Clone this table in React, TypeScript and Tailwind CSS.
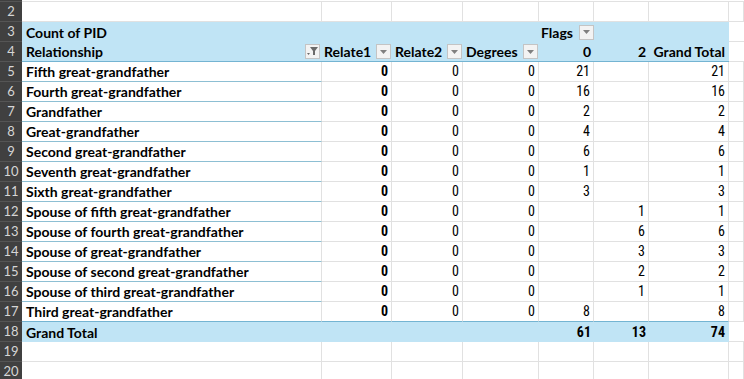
import React from "react";

const LABEL_FONT = "font-['Lato','Open_Sans',sans-serif]";
const NUM_FONT = "font-['Liberation_Sans_Narrow','Roboto_Condensed','Roboto',sans-serif]";

type Row = { label: string; e?: number; f?: number; g: number };

const ROWS: Row[] = [
  { label: "Fifth great-grandfather", e: 21, g: 21 },
  { label: "Fourth great-grandfather", e: 16, g: 16 },
  { label: "Grandfather", e: 2, g: 2 },
  { label: "Great-grandfather", e: 4, g: 4 },
  { label: "Second great-grandfather", e: 6, g: 6 },
  { label: "Seventh great-grandfather", e: 1, g: 1 },
  { label: "Sixth great-grandfather", e: 3, g: 3 },
  { label: "Spouse of fifth great-grandfather", f: 1, g: 1 },
  { label: "Spouse of fourth great-grandfather", f: 6, g: 6 },
  { label: "Spouse of great-grandfather", f: 3, g: 3 },
  { label: "Spouse of second great-grandfather", f: 2, g: 2 },
  { label: "Spouse of third great-grandfather", f: 1, g: 1 },
  { label: "Third great-grandfather", e: 8, g: 8 },
];

// dropdown arrow button on pivot headers
function DropBtn() {
  return (
    <span className="inline-flex h-[15px] w-[15px] items-center justify-center border border-[#c4c4c4] bg-[#f3f3f3]">
      <svg width="7" height="4" viewBox="0 0 7 4">
        <path d="M0 0 L7 0 L3.5 4 Z" fill="#808080" />
      </svg>
    </span>
  );
}

function FilterBtn() {
  return (
    <span className="inline-flex h-[15px] w-[15px] items-center justify-center border border-[#c4c4c4] bg-[#f3f3f3]">
      <svg width="11" height="9" viewBox="0 0 11 9">
        <path d="M3 0 L11 0 L8 4 L8 8 L6 8 L6 4 Z" fill="#6b6b6b" />
        <path d="M0 6 L3 6 L1.5 8 Z" fill="#6b6b6b" />
      </svg>
    </span>
  );
}

function RowNum({ n }: { n: number | string }) {
  return (
    <div className={`flex w-[22px] shrink-0 items-center justify-center border-b border-[#555] bg-[#404040] text-[13px] text-[#d6d6d6] ${LABEL_FONT}`}>
      {n}
    </div>
  );
}

function Cell({ w, children, cls = "" }: { w: string; children?: React.ReactNode; cls?: string }) {
  return (
    <div className={`flex shrink-0 items-center justify-end border-b border-r border-[#e1e1e1] pr-[3px] text-[14px] text-black ${NUM_FONT} ${w} ${cls}`}>
      {children}
    </div>
  );
}

function EmptyRow({ n }: { n: number }) {
  return (
    <div className="flex h-5">
      <RowNum n={n} />
      <Cell w="w-[300px]" />
      <Cell w="w-[70px]" />
      <Cell w="w-[71px]" />
      <Cell w="w-[76px]" />
      <Cell w="w-[55px]" />
      <Cell w="w-[55px]" />
      <Cell w="w-[80px]" />
      <Cell w="flex-1" />
    </div>
  );
}

export default function App() {
  return (
    <div className="h-[379px] w-[744px] overflow-hidden bg-white">
      {/* row 1 peeking */}
      <div className="flex h-[2px]">
        <div className="w-[22px] shrink-0 border-b border-[#555] bg-[#404040]" />
        <div className="flex-1 border-b border-[#e1e1e1]" />
      </div>
      <EmptyRow n={2} />

      {/* row 3 */}
      <div className="flex h-5">
        <RowNum n={3} />
        <div className={`flex w-[707px] shrink-0 items-center bg-[#c0e4f5] text-[14px] font-bold text-black ${LABEL_FONT}`}>
          <div className="w-[300px] shrink-0 pl-[4px]">Count of PID</div>
          <div className="w-[217px] shrink-0" />
          <div className="flex w-[55px] shrink-0 items-center gap-[6px] pl-[2px]">
            Flags
            <DropBtn />
          </div>
        </div>
        <div className="flex-1 border-b border-[#e1e1e1]" />
      </div>

      {/* row 4 */}
      <div className="flex h-5">
        <RowNum n={4} />
        <div className={`flex w-[707px] shrink-0 items-center border-b border-[#74b4d2] bg-[#c0e4f5] text-[14px] font-bold text-black ${LABEL_FONT}`}>
          <div className="flex w-[300px] shrink-0 items-center justify-between pl-[4px] pr-[2px]">
            Relationship
            <FilterBtn />
          </div>
          <div className="flex w-[70px] shrink-0 items-center justify-between pl-[2px] pr-[1px]">
            Relate1
            <DropBtn />
          </div>
          <div className="flex w-[71px] shrink-0 items-center justify-between pl-[3px] pr-[1px]">
            Relate2
            <DropBtn />
          </div>
          <div className="flex w-[76px] shrink-0 items-center justify-between pl-[3px] pr-[1px]">
            Degrees
            <DropBtn />
          </div>
          <div className="w-[55px] shrink-0 pr-[3px] text-right">0</div>
          <div className="w-[55px] shrink-0 pr-[3px] text-right">2</div>
          <div className="w-[80px] shrink-0 pr-[4px] text-right">Grand Total</div>
        </div>
        <div className="flex-1 border-b border-[#e1e1e1]" />
      </div>

      {ROWS.map((r, i) => {
        const last = i === ROWS.length - 1 ? "border-b-[#74b4d2]" : "";
        return (
          <div key={r.label} className="flex h-5">
            <RowNum n={i + 5} />
            <div
              className={`flex w-[300px] shrink-0 items-center border-b border-r border-r-[#e1e1e1] pl-[4px] text-[14px] font-bold text-black ${LABEL_FONT} ${
                last || "border-b-[#8dbfd3]"
              }`}
            >
              {r.label}
            </div>
            <Cell w="w-[70px]" cls={`font-bold ${last}`}>0</Cell>
            <Cell w="w-[71px]" cls={last}>0</Cell>
            <Cell w="w-[76px]" cls={last}>0</Cell>
            <Cell w="w-[55px]" cls={last}>{r.e}</Cell>
            <Cell w="w-[55px]" cls={last}>{r.f}</Cell>
            <Cell w="w-[80px]" cls={last}>{r.g}</Cell>
            <Cell w="flex-1" />
          </div>
        );
      })}

      {/* row 18 grand total */}
      <div className="flex h-5">
        <RowNum n={18} />
        <div className="flex w-[707px] shrink-0 items-center bg-[#c0e4f5] text-[14px] font-bold text-black">
          <div className={`w-[300px] shrink-0 pl-[4px] ${LABEL_FONT}`}>Grand Total</div>
          <div className="w-[217px] shrink-0" />
          <div className={`w-[55px] shrink-0 pr-[3px] text-right ${NUM_FONT}`}>61</div>
          <div className={`w-[55px] shrink-0 pr-[3px] text-right ${NUM_FONT}`}>13</div>
          <div className={`w-[80px] shrink-0 pr-[4px] text-right ${NUM_FONT}`}>74</div>
        </div>
        <div className="flex-1 border-b border-[#e1e1e1]" />
      </div>

      <EmptyRow n={19} />
      <EmptyRow n={20} />
    </div>
  );
}
